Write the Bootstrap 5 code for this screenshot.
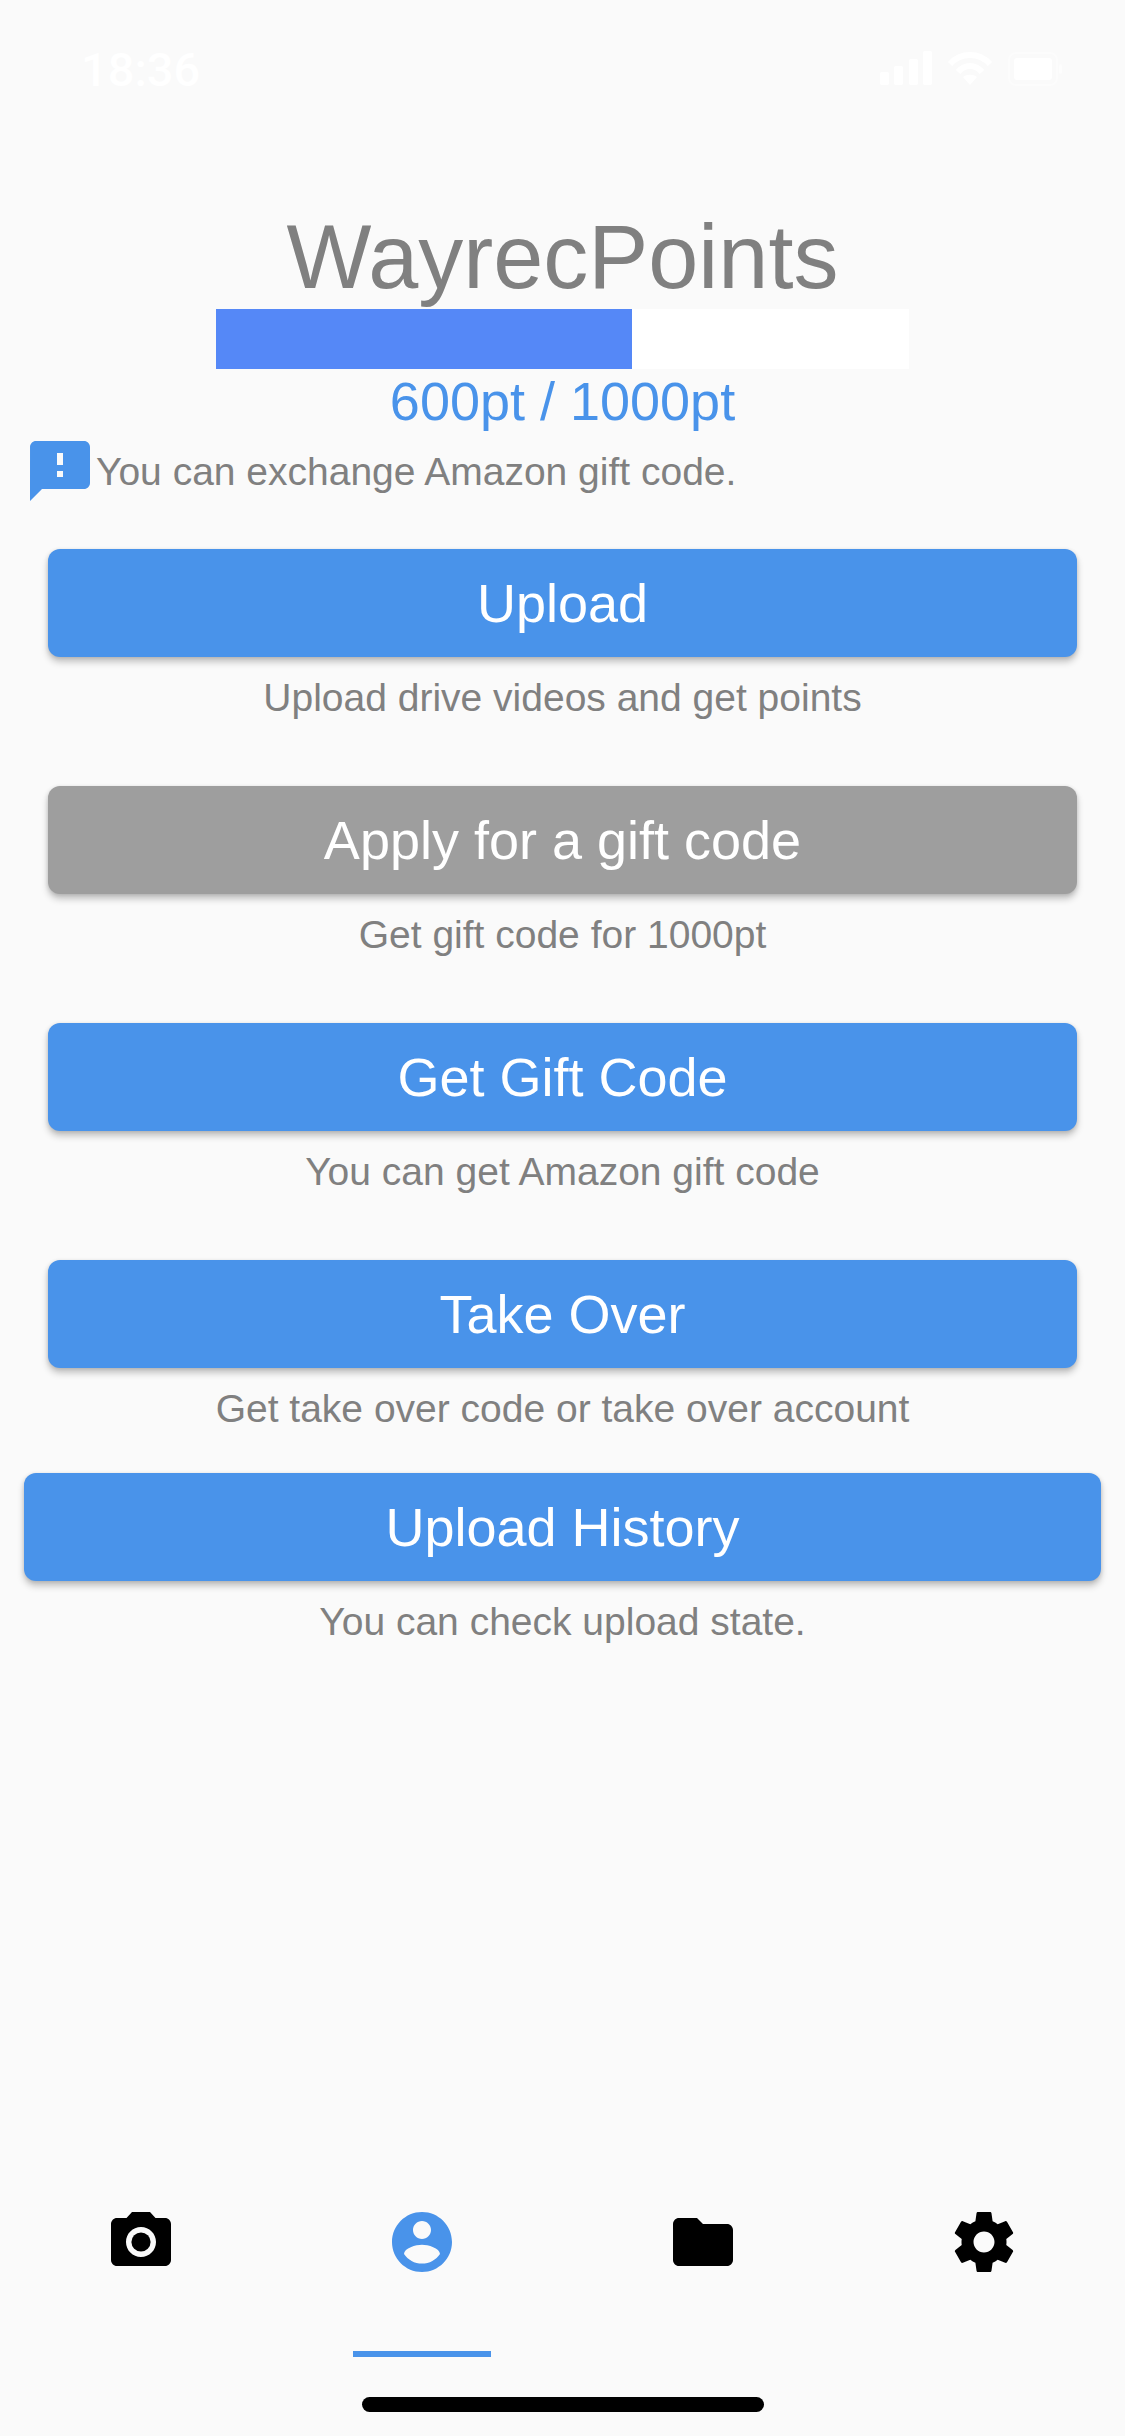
<!DOCTYPE html>
<html lang="en">
<head>
<meta charset="utf-8">
<title>WayrecPoints</title>
<link href="https://cdn.jsdelivr.net/npm/bootstrap@5.3.0/dist/css/bootstrap.min.css" rel="stylesheet">
<style>
html,body{background:#fafafa;margin:0;}
body{font-family:"Liberation Sans",Arial,sans-serif;color:#808080;}
.phone{width:1125px;height:2436px;overflow:hidden;position:relative;}
.statusrow{height:205px;padding:46px 63px 0 81px;color:#fff;}
.clock{font-family:Roboto,"Liberation Sans",sans-serif;font-weight:500;font-size:47px;line-height:47px;}
.sysicons{gap:15px;height:36px;margin-top:5px;}
.apptitle{font-size:90px;line-height:104px;font-weight:400;margin:0;}
.meter{width:693px;height:60px;background:#fff;border-radius:0;}
.meter .progress-bar{background:#5588f7;}
.score{font-size:54px;line-height:62px;margin-top:1px;color:#4993ea;}
.noticerow{height:72px;padding-left:24px;margin-top:3px;font-size:39px;line-height:45px;}
.appicon{width:72px;height:72px;flex:none;display:block;}
.actions{margin-top:42px;}
.actionblock{margin:0 48px 66px;}
.actionblock.near{margin-bottom:42px;}
.actionblock.wide{margin:0 24px;}
.actionbtn{display:block;width:100%;height:108px;padding:0;border:0;border-radius:12px;font-size:54px;line-height:108px;color:#fff;box-shadow:0 5px 7px rgba(0,0,0,.22),0 1px 4px rgba(0,0,0,.12);}
.actionbtn.tone-blue,.actionbtn.tone-blue:hover{background:#4993ea;color:#fff;}
.actionbtn.tone-grey,.actionbtn.tone-grey:hover{background:#9e9e9e;color:#fff;}
.actionnote{margin:18px 0 0;font-size:39px;line-height:45px;}
.tabbar{padding-bottom:79px;}
.tabcell{position:relative;height:151px;}
.tabmark{position:absolute;left:50%;bottom:0;width:138px;height:6px;margin-left:-69px;background:#4993ea;}
.homebar{position:absolute;left:362px;top:2397px;width:402px;height:15px;border-radius:8px;background:#000;}
.tab-on{fill:#4993ea;}
</style>
</head>
<body>
<div class="phone d-flex flex-column">
  <div class="statusrow d-flex justify-content-between align-items-start">
    <div class="clock">18:36</div>
    <div class="sysicons d-flex align-items-start">
      <svg width="52" height="34" viewBox="0 0 52 34" fill="#fff"><rect x="0" y="21" width="9" height="13" rx="2"/><rect x="14" y="15" width="9" height="19" rx="2"/><rect x="29" y="8" width="9" height="26" rx="2"/><rect x="43" y="0" width="9" height="34" rx="2"/></svg>
      <svg width="46" height="34" viewBox="0 0 46 34" fill="none" stroke="#fff" stroke-width="6"><path d="M3 13C14 1 32 1 43 13"/><path d="M11 21C18 13 28 13 35 21"/><path d="M23 34L16 26C20 23 26 23 30 26Z" fill="#fff" stroke="none"/></svg>
      <svg width="54" height="36" viewBox="0 0 54 36" fill="none"><rect x="1" y="2" width="48" height="32" rx="7" stroke="#fff" stroke-opacity=".4" stroke-width="2"/><rect x="6" y="7" width="38" height="22" rx="3" fill="#fff"/><rect x="51" y="13" width="3" height="10" rx="1.5" fill="#fff" fill-opacity=".5"/></svg>
    </div>
  </div>

  <h1 class="apptitle text-center">WayrecPoints</h1>
  <div class="progress meter mx-auto"><div class="progress-bar" role="progressbar" style="width:60%" aria-valuenow="600" aria-valuemin="0" aria-valuemax="1000"></div></div>
  <div class="score text-center">600pt / 1000pt</div>

  <div class="noticerow d-flex align-items-center">
    <svg class="appicon" viewBox="0 0 24 24" fill="#4993ea"><path d="M20 2H4c-1.1 0-1.99.9-1.99 2L2 22l4-4h14c1.1 0 2-.9 2-2V4c0-1.1-.9-2-2-2zm-7 8h-2V6h2v4zm0 4h-2v-2h2v2z"/></svg>
    <span>You can exchange Amazon gift code.</span>
  </div>

  <div class="actions flex-grow-1">
    <div class="actionblock text-center"><button type="button" class="btn actionbtn tone-blue">Upload</button><p class="actionnote">Upload drive videos and get points</p></div>
    <div class="actionblock text-center"><button type="button" class="btn actionbtn tone-grey">Apply for a gift code</button><p class="actionnote">Get gift code for 1000pt</p></div>
    <div class="actionblock text-center"><button type="button" class="btn actionbtn tone-blue">Get Gift Code</button><p class="actionnote">You can get Amazon gift code</p></div>
    <div class="actionblock near text-center"><button type="button" class="btn actionbtn tone-blue">Take Over</button><p class="actionnote">Get take over code or take over account</p></div>
    <div class="actionblock wide text-center"><button type="button" class="btn actionbtn tone-blue">Upload History</button><p class="actionnote">You can check upload state.</p></div>
  </div>

  <div class="tabbar d-flex">
    <div class="tabcell flex-fill w-25 d-flex justify-content-center"><svg class="appicon" viewBox="0 0 24 24"><circle cx="12" cy="12" r="3.2"/><path d="M9 2L7.17 4H4c-1.1 0-2 .9-2 2v12c0 1.1.9 2 2 2h16c1.1 0 2-.9 2-2V6c0-1.1-.9-2-2-2h-3.17L15 2H9zm3 15c-2.76 0-5-2.24-5-5s2.24-5 5-5 5 2.24 5 5-2.24 5-5 5z"/></svg></div>
    <div class="tabcell flex-fill w-25 d-flex justify-content-center"><svg class="appicon tab-on" viewBox="0 0 24 24"><path d="M12 2C6.48 2 2 6.48 2 12s4.48 10 10 10 10-4.48 10-10S17.52 2 12 2zm0 3c1.66 0 3 1.34 3 3s-1.34 3-3 3-3-1.34-3-3 1.34-3 3-3zm0 14.2c-2.5 0-4.71-1.28-6-3.22.03-1.99 4-3.08 6-3.08 1.99 0 5.97 1.09 6 3.08-1.29 1.94-3.5 3.22-6 3.22z"/></svg><span class="tabmark"></span></div>
    <div class="tabcell flex-fill w-25 d-flex justify-content-center"><svg class="appicon" viewBox="0 0 24 24"><path d="M10 4H4c-1.1 0-1.99.9-1.99 2L2 18c0 1.1.9 2 2 2h16c1.1 0 2-.9 2-2V8c0-1.1-.9-2-2-2h-8l-2-2z"/></svg></div>
    <div class="tabcell flex-fill w-25 d-flex justify-content-center"><svg class="appicon" viewBox="0 0 24 24"><path d="M19.43 12.98c.04-.32.07-.64.07-.98s-.03-.66-.07-.98l2.11-1.65c.19-.15.24-.42.12-.64l-2-3.46c-.12-.22-.39-.3-.61-.22l-2.49 1c-.52-.4-1.08-.73-1.69-.98l-.38-2.65C14.46 2.18 14.25 2 14 2h-4c-.25 0-.46.18-.49.42l-.38 2.65c-.61.25-1.17.59-1.69.98l-2.49-1c-.23-.09-.49 0-.61.22l-2 3.46c-.13.22-.07.49.12.64l2.11 1.65c-.04.32-.07.65-.07.98s.03.66.07.98l-2.11 1.65c-.19.15-.24.42-.12.64l2 3.46c.12.22.39.3.61.22l2.49-1c.52.4 1.08.73 1.69.98l.38 2.65c.03.24.24.42.49.42h4c.25 0 .46-.18.49-.42l.38-2.65c.61-.25 1.17-.59 1.69-.98l2.49 1c.23.09.49 0 .61-.22l2-3.46c.12-.22.07-.49-.12-.64l-2.11-1.65zM12 15.5c-1.93 0-3.5-1.57-3.5-3.5s1.57-3.5 3.5-3.5 3.5 1.57 3.5 3.5-1.57 3.5-3.5 3.5z"/></svg></div>
  </div>
  <div class="homebar"></div>
</div>
<script src="https://cdn.jsdelivr.net/npm/bootstrap@5.3.0/dist/js/bootstrap.bundle.min.js"></script>
</body>
</html>
